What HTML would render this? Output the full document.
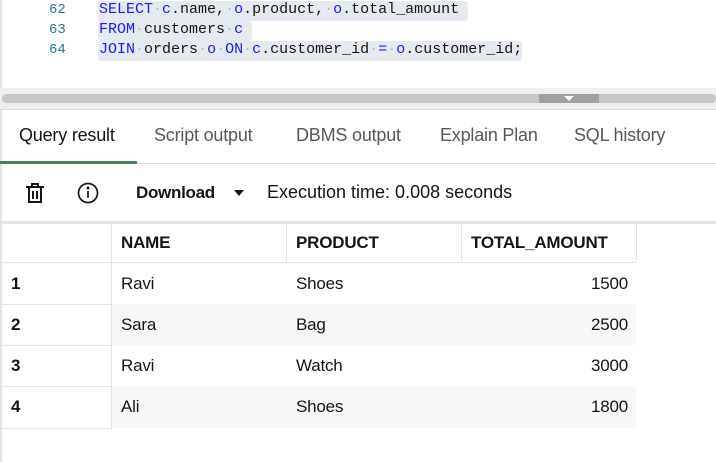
<!DOCTYPE html>
<html><head><style>
*{margin:0;padding:0;box-sizing:border-box}
body{width:716px;height:462px;overflow:hidden;background:#fff;font-family:"Liberation Sans",sans-serif;color:#161513;position:relative}
.abs{position:absolute}
.code{font-family:"Liberation Mono",monospace;font-size:15px;line-height:20px;white-space:pre}
.ln{color:#237893;left:49px;width:30px;font-size:14px}
.hl{background:#e5e9f0;border-radius:3px}
.k{color:#1a1aff}
.d{color:#b0b8c8}
.tab{top:125px;font-size:18px;color:#5a5855;letter-spacing:-0.2px}
.cell{position:absolute;font-size:17px;letter-spacing:-0.2px;line-height:20px}
</style></head><body>
<div class="abs" style="left:0;top:0;width:2px;height:462px;background:#e4e4e4"></div>
<div class="abs code ln" style="top:0">62</div>
<div class="abs code ln" style="top:20px">63</div>
<div class="abs code ln" style="top:40px">64</div>
<div class="abs hl" style="left:98px;top:1px;width:370px;height:20px"></div>
<div class="abs hl" style="left:98px;top:21px;width:154px;height:20px"></div>
<div class="abs hl" style="left:98px;top:41px;width:424px;height:20px"></div>
<div class="abs code" style="left:99px;top:0"><span class="k">SELECT</span><span class="d">·</span><span class="k">c</span>.name,<span class="d">·</span><span class="k">o</span>.product,<span class="d">·</span><span class="k">o</span>.total_amount</div>
<div class="abs code" style="left:99px;top:20px"><span class="k">FROM</span><span class="d">·</span>customers<span class="d">·</span><span class="k">c</span></div>
<div class="abs code" style="left:99px;top:40px"><span class="k">JOIN</span><span class="d">·</span>orders<span class="d">·</span><span class="k">o</span><span class="d">·</span><span class="k">ON</span><span class="d">·</span><span class="k">c</span>.customer_id<span class="d">·</span><span class="k">=</span><span class="d">·</span><span class="k">o</span>.customer_id;</div>
<div class="abs" style="left:0;top:88px;width:716px;height:22px;background:#efefef;border-bottom:1px solid #dcdcdc"></div>
<div class="abs" style="left:2px;top:94px;width:714px;height:9px;background:#c8c8c8;border-radius:4px"></div>
<div class="abs" style="left:539px;top:94px;width:60px;height:9px;background:#a0a0a0"></div>
<div class="abs" style="left:564px;top:96px;width:0;height:0;border-left:5px solid transparent;border-right:5px solid transparent;border-top:5px solid #fff"></div>
<div class="abs tab" style="left:19px;color:#161513">Query result</div>
<div class="abs tab" style="left:154px">Script output</div>
<div class="abs tab" style="left:296px">DBMS output</div>
<div class="abs tab" style="left:440px">Explain Plan</div>
<div class="abs tab" style="left:574px">SQL history</div>
<div class="abs" style="left:0;top:163px;width:716px;height:1px;background:#e0e0e0"></div>
<div class="abs" style="left:0;top:161px;width:137px;height:3px;background:#4a7d5a"></div>
<svg class="abs" style="left:24px;top:182px" width="22" height="22" viewBox="0 0 22 22" fill="none" stroke="#161513" stroke-width="2"><path d="M2 5h18M8 5V2h6v3M5 5v15h12V5M9 9v8M13 9v8"/></svg>
<svg class="abs" style="left:77px;top:182px" width="22" height="22" viewBox="0 0 22 22" fill="none" stroke="#161513" stroke-width="1.7"><circle cx="11" cy="11" r="9.5"/><path d="M11 9v7"/><circle cx="11" cy="6" r="0.6" fill="#161513"/></svg>
<div class="abs" style="left:136px;top:183px;font-size:17px;font-weight:bold;letter-spacing:-0.3px">Download</div>
<div class="abs" style="left:234px;top:190px;width:0;height:0;border-left:5px solid transparent;border-right:5px solid transparent;border-top:6px solid #161513"></div>
<div class="abs" style="left:267px;top:182px;font-size:18px;letter-spacing:0">Execution time: 0.008 seconds</div>
<div class="abs" style="left:0;top:221px;width:716px;height:3px;background:#e4e4e4"></div>
<div class="abs" style="left:112px;top:304px;width:524px;height:41px;background:#f7f7f7"></div>
<div class="abs" style="left:112px;top:386px;width:524px;height:42px;background:#f7f7f7"></div>
<div class="abs" style="left:0;top:262px;width:636px;height:1px;background:#e4e4e4"></div>
<div class="abs" style="left:0;top:304px;width:112px;height:1px;background:#e4e4e4"></div>
<div class="abs" style="left:0;top:345px;width:112px;height:1px;background:#e4e4e4"></div>
<div class="abs" style="left:0;top:386px;width:112px;height:1px;background:#e4e4e4"></div>
<div class="abs" style="left:0;top:428px;width:112px;height:1px;background:#e4e4e4"></div>
<div class="abs" style="left:111px;top:224px;width:1px;height:204px;background:#e4e4e4"></div>
<div class="abs" style="left:286px;top:224px;width:1px;height:38px;background:#e4e4e4"></div>
<div class="abs" style="left:461px;top:224px;width:1px;height:38px;background:#e4e4e4"></div>
<div class="abs" style="left:636px;top:224px;width:1px;height:38px;background:#e4e4e4"></div>
<div class="cell" style="left:121px;top:233px;font-weight:bold">NAME</div>
<div class="cell" style="left:296px;top:233px;font-weight:bold">PRODUCT</div>
<div class="cell" style="left:471px;top:233px;font-weight:bold">TOTAL_AMOUNT</div>
<div class="cell" style="left:11px;top:274px;font-weight:bold">1</div>
<div class="cell" style="left:121px;top:274px">Ravi</div>
<div class="cell" style="left:296px;top:274px">Shoes</div>
<div class="cell" style="left:461px;width:167px;text-align:right;top:274px">1500</div>
<div class="cell" style="left:11px;top:315px;font-weight:bold">2</div>
<div class="cell" style="left:121px;top:315px">Sara</div>
<div class="cell" style="left:296px;top:315px">Bag</div>
<div class="cell" style="left:461px;width:167px;text-align:right;top:315px">2500</div>
<div class="cell" style="left:11px;top:356px;font-weight:bold">3</div>
<div class="cell" style="left:121px;top:356px">Ravi</div>
<div class="cell" style="left:296px;top:356px">Watch</div>
<div class="cell" style="left:461px;width:167px;text-align:right;top:356px">3000</div>
<div class="cell" style="left:11px;top:397px;font-weight:bold">4</div>
<div class="cell" style="left:121px;top:397px">Ali</div>
<div class="cell" style="left:296px;top:397px">Shoes</div>
<div class="cell" style="left:461px;width:167px;text-align:right;top:397px">1800</div>
</body></html>
